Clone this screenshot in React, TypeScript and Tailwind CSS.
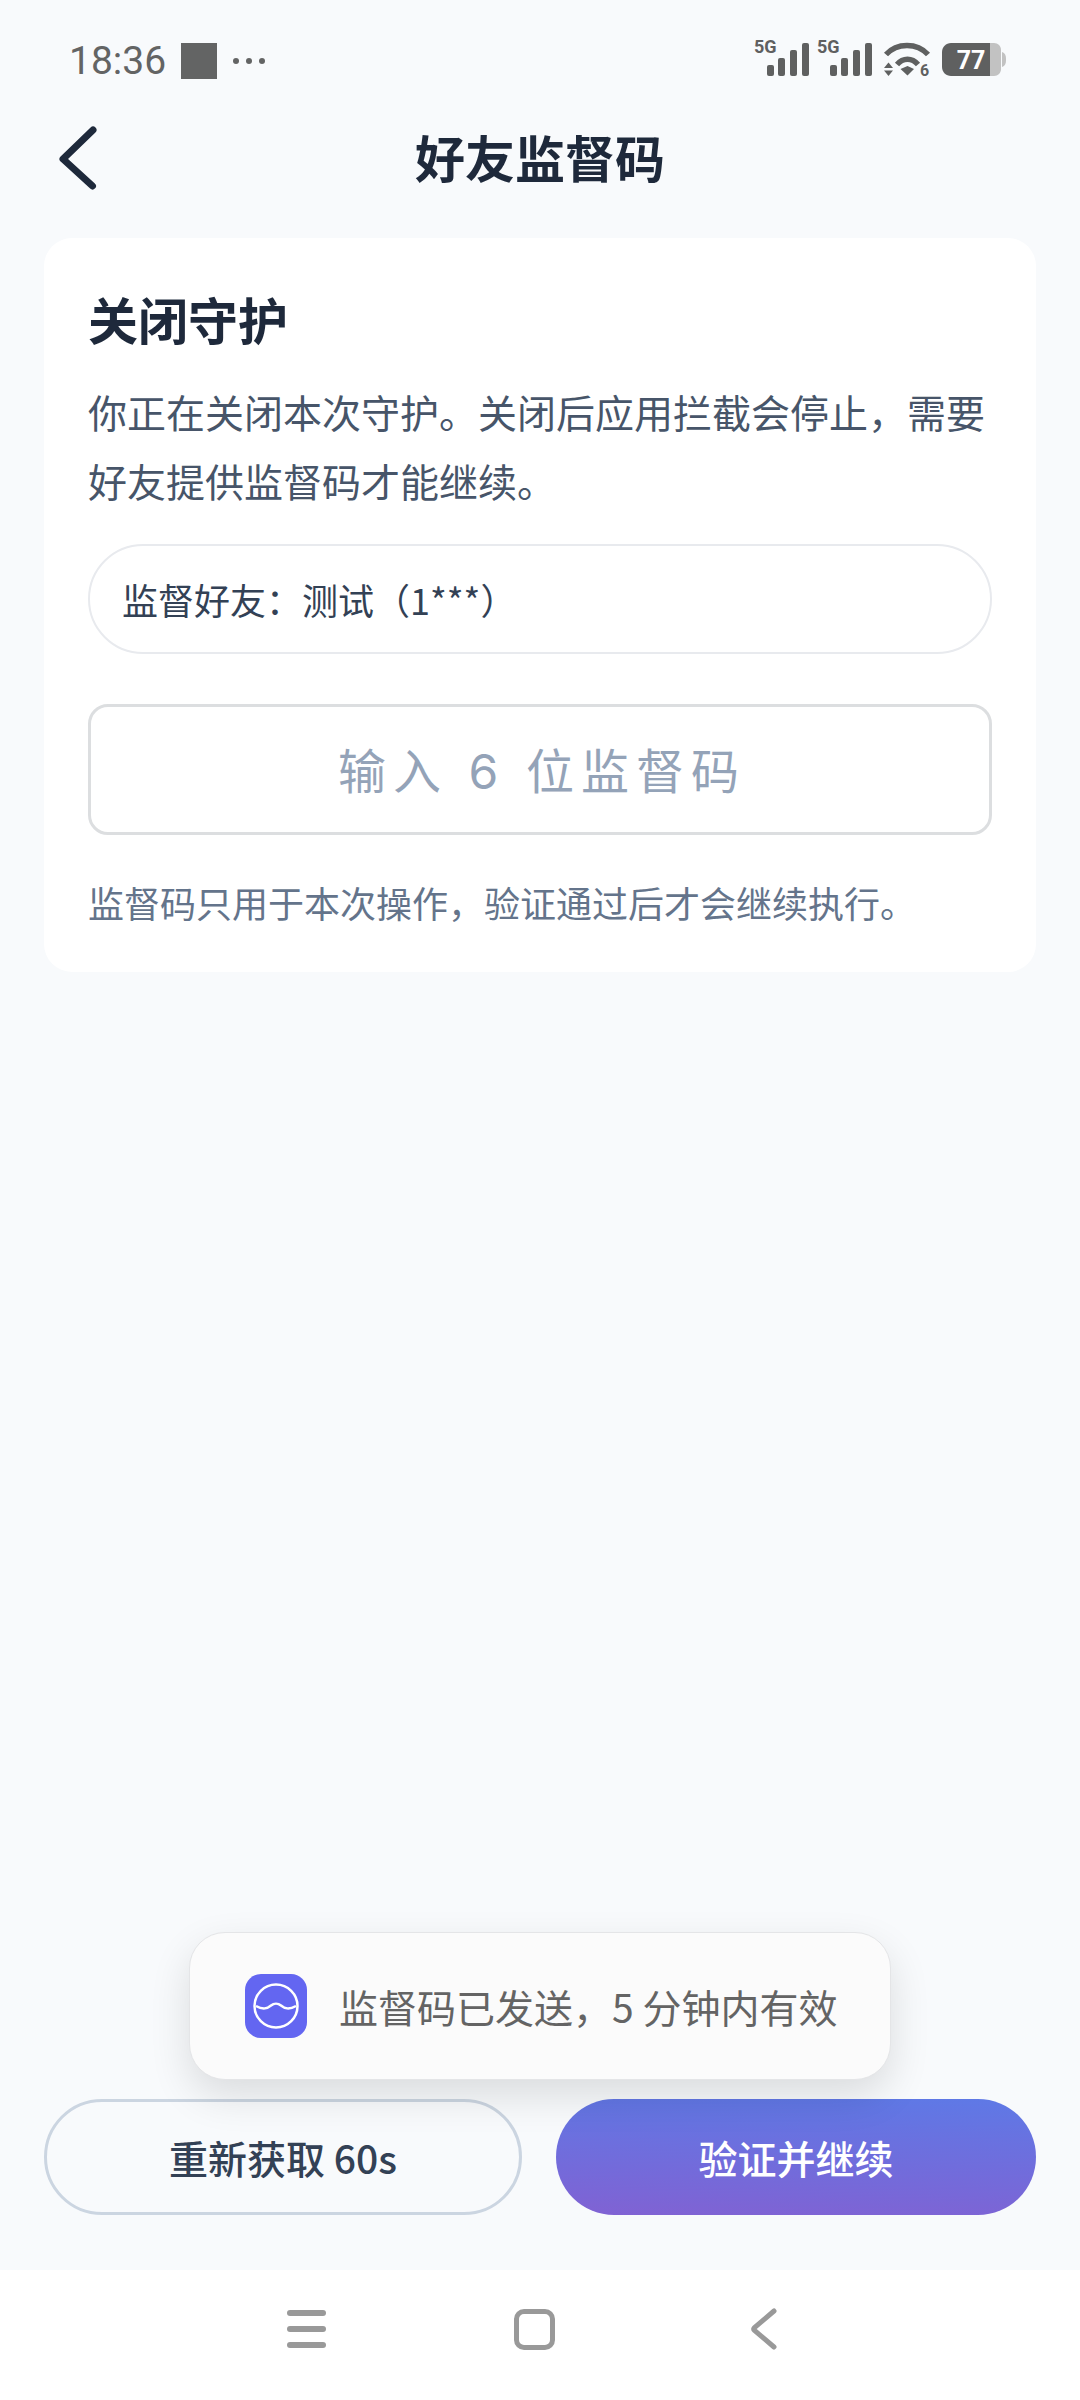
import type { ReactElement } from "react"

const cjk = "font-['Noto_Sans_CJK_SC',sans-serif]"

function SignalIcon(): ReactElement {
  return (
    <svg width="55" height="36" viewBox="0 0 55 36" className="block overflow-visible">
      <text x="0" y="13" fontSize="18" fontWeight="700" fontFamily="Roboto, sans-serif" fill="#5f6060">5G</text>
      <rect x="13" y="25" width="7" height="11" rx="2" fill="#5f6060" />
      <rect x="24" y="18" width="7" height="18" rx="2" fill="#5f6060" />
      <rect x="36" y="10" width="7" height="26" rx="2" fill="#5f6060" />
      <rect x="48" y="3" width="7" height="33" rx="2" fill="#5f6060" />
    </svg>
  )
}

function WifiIcon(): ReactElement {
  return (
    <svg width="46" height="36" viewBox="0 0 46 36" className="block overflow-visible">
      <path d="M2 14.500C13 2.500 33 2.500 44 14.500" stroke="#5f6060" strokeWidth="5.500" fill="none" />
      <path d="M13 24.500C19 17.500 28 17.500 34 24.500" stroke="#5f6060" strokeWidth="5.500" fill="none" />
      <path d="M16.500 29L23.500 26L30 29L23.500 35.500Z" fill="#5f6060" />
      <path d="M0 28L4.500 22.500L9 28Z" fill="#5f6060" />
      <path d="M0 30.500L9 30.500L4.500 36Z" fill="#5f6060" />
      <text x="36" y="36" fontSize="16" fontWeight="700" fontFamily="Roboto, sans-serif" fill="#5f6060">6</text>
    </svg>
  )
}

function BatteryIcon(): ReactElement {
  return (
    <svg width="64" height="33" viewBox="0 0 64 33" className="block overflow-visible">
      <path d="M48 0H52C56 0 59 3 59 7V26C59 30 56 33 52 33H48Z" fill="#c2c2c2" />
      <path d="M60 9C63 10 64 12 64 16.500C64 21 63 23 60 24Z" fill="#c2c2c2" />
      <path d="M9 0H48V33H9C4 33 0 29 0 24V9C0 4 4 0 9 0Z" fill="#5f6060" />
      <text x="29" y="26" textAnchor="middle" fontSize="25" fontWeight="700" fontFamily="Roboto, sans-serif" fill="#ffffff">77</text>
    </svg>
  )
}

function StatusBar(): ReactElement {
  return (
    <div className="flex h-[120px] items-center justify-between pl-[69px] pr-[74px]">
      <div className="flex items-center pt-[2px]">
        <span className="font-['Roboto',sans-serif] text-[39px] leading-none text-[#636464]">18:36</span>
        <div className="ml-[15px] h-[36px] w-[36px] bg-[#636464]" />
        <div className="ml-[16px] flex gap-[7px]">
          <span className="h-[6px] w-[6px] rounded-full bg-[#636464]" />
          <span className="h-[6px] w-[6px] rounded-full bg-[#636464]" />
          <span className="h-[6px] w-[6px] rounded-full bg-[#636464]" />
        </div>
      </div>
      <div className="flex items-end gap-[8px] pb-[4px]">
        <SignalIcon />
        <SignalIcon />
        <div className="ml-[4px]"><WifiIcon /></div>
        <div className="ml-[4px]"><BatteryIcon /></div>
      </div>
    </div>
  )
}

function NavBar(): ReactElement {
  return (
    <div className="flex h-[130px] items-center bg-white pb-[12px] pl-[287px]">
      <div className="flex w-[39px] flex-col gap-[10px]">
        <span className="h-[6px] rounded-full bg-[#999999]" />
        <span className="h-[6px] rounded-full bg-[#999999]" />
        <span className="h-[6px] rounded-full bg-[#999999]" />
      </div>
      <div className="ml-[188px] h-[41px] w-[41px] rounded-[10px] border-[5px] border-[#999999]" />
      <svg width="26" height="42" viewBox="0 0 26 42" className="ml-[196px] block">
        <path d="M23 3L3.500 19.500Q2 21 3.500 22.500L23 39" stroke="#999999" strokeWidth="5" strokeLinecap="round" fill="none" />
      </svg>
    </div>
  )
}

export default function App(): ReactElement {
  return (
    <div className={`relative flex h-[2400px] w-[1080px] flex-col overflow-hidden bg-[#f8fafc] ${cjk}`}>
      <StatusBar />

      <header className="relative flex h-[80px] items-center justify-center pb-[8px]">
        <button className="absolute left-[58px] top-[4px]">
          <svg width="42" height="70" viewBox="0 0 42 70" className="block">
            <path d="M35 6L5 35L34.500 62" stroke="#1e293b" strokeWidth="7" strokeLinecap="round" strokeLinejoin="round" fill="none" />
          </svg>
        </button>
        <h1 className="text-[50px] font-bold leading-none text-[#1e293b]">好友监督码</h1>
      </header>

      <section className="mx-[44px] mt-[38px] h-[734px] rounded-[28px] bg-white px-[44px] pt-[50px]">
        <h2 className="text-[50px] font-bold leading-[60px] text-[#1e293b]">关闭守护</h2>
        <p className="mt-[29px] text-[39px] leading-[69px] text-[#475569]">
          你正在关闭本次守护。关闭后应用拦截会停止，需要好友提供监督码才能继续。
        </p>
        <div className="mt-[29px] flex h-[110px] items-center rounded-full border-2 border-[#e8eaee] px-[32px] text-[36px] text-[#334155]">
          监督好友：测试（1***）
        </div>
        <div className="mt-[50px] flex h-[131px] items-center justify-center rounded-[20px] border-[3px] border-[#dcdee0] pl-[4px] pt-[4px] font-['Inter','Noto_Sans_CJK_SC',sans-serif] text-[48px] tracking-[7px] text-[#94a3b8]">
          输入 6 位监督码
        </div>
        <p className="mt-[45px] text-[36px] leading-[44px] text-[#64748b]">
          监督码只用于本次操作，验证通过后才会继续执行。
        </p>
      </section>

      <div className="flex-1" />

      <div className="flex gap-[34px] px-[44px] pb-[55px]">
        <button className="flex h-[116px] w-[478px] items-center justify-center rounded-full border-[3px] border-[#cbd5e1] text-[39px] font-medium text-[#334155]">
          重新获取 60s
        </button>
        <button className="flex h-[116px] flex-1 items-center justify-center rounded-full bg-[linear-gradient(182deg,#5e79e6,#8062d3)] text-[39px] font-medium text-white">
          验证并继续
        </button>
      </div>

      <NavBar />

      {/* toast sits over the buttons */}
      <div className="absolute left-[189px] top-[1932px] flex h-[148px] w-[702px] items-center rounded-[36px] border border-[#e4e5e7] bg-[#fbfbfb] pl-[55px] shadow-[0_16px_40px_rgba(0,0,0,0.12)]">
        <div className="flex h-[64px] w-[62px] items-center justify-center rounded-[16px] bg-[#6366f1]">
          <svg width="46" height="48" viewBox="0 0 46 48" className="block">
            <circle cx="23" cy="24" r="21.500" stroke="#ffffff" strokeWidth="2.500" fill="none" />
            <path d="M3 24C10 28 14 27 18 23.500C21 21 25 21 28 23.500C32 27 36 28 43 24" stroke="#ffffff" strokeWidth="2.500" fill="none" />
          </svg>
        </div>
        <span className="ml-[32px] text-[39px] text-[#646464]">监督码已发送，5 分钟内有效</span>
      </div>
    </div>
  )
}
